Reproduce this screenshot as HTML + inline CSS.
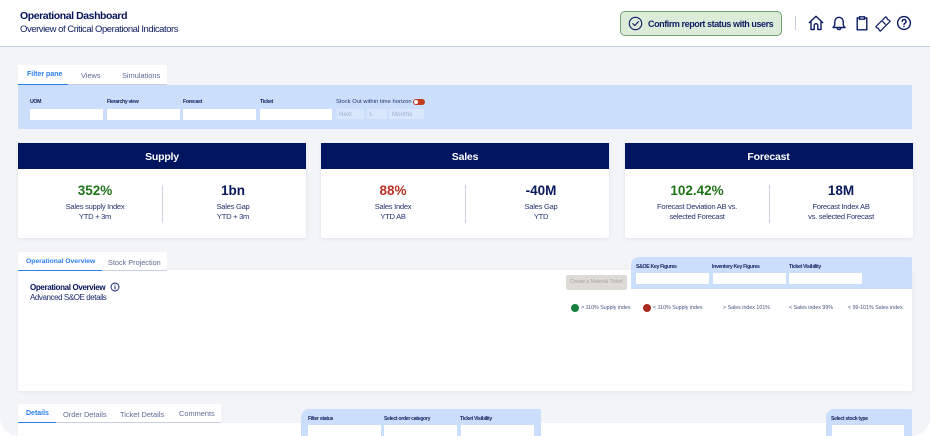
<!DOCTYPE html>
<html><head><meta charset="utf-8"><style>
*{box-sizing:border-box}
html,body{margin:0;padding:0;background:#fff}
body{width:930px;height:436px;overflow:hidden;position:relative;font-family:"Liberation Sans",sans-serif;color:#0a1a5c}
.a{position:absolute;white-space:nowrap}
.bg{position:absolute;left:0;top:46px;width:930px;height:390px;background:#f3f4f8;border-top:1.5px solid #ccd2e6;border-radius:0 0 18px 18px}
.card{position:absolute;top:142.5px;width:288px;height:95.5px;background:#fff;box-shadow:0 1px 4px rgba(30,40,90,.08);border-radius:2px}
.hd{height:26.5px;background:#001560;color:#fff;text-align:center;font-size:10.5px;font-weight:bold;line-height:28.5px;letter-spacing:-.2px}
.v{position:absolute;top:40px;font-size:13.5px;font-weight:bold;text-align:center;line-height:16px;width:144px}
.l{position:absolute;top:59.5px;font-size:7.6px;text-align:center;line-height:10px;width:144px;color:#26356f;letter-spacing:-.28px}
.dv{position:absolute;left:144px;top:42.5px;height:38px;width:1px;background:#ccd3e4}
.fl{position:absolute;font-size:5.2px;font-weight:bold;color:#152560;white-space:nowrap;letter-spacing:-.33px}
.in{position:absolute;background:#fff;height:11px}
.t{position:absolute;font-size:7.4px;color:#5f6a96;white-space:nowrap}
.t.on{color:#2a7ff0;font-weight:bold;font-size:7px}
.tb{position:absolute;background:#fff}
.lg{position:absolute;top:305px;font-size:5.3px;color:#47527f;white-space:nowrap}
.dot{position:absolute;top:304px;width:8px;height:8px;border-radius:50%}
svg.i{position:absolute;fill:none;stroke:#0b1c66;stroke-width:1.4;stroke-linecap:round;stroke-linejoin:round}
</style></head><body>
<div class="bg"></div>

<div class="a" style="left:20px;top:10px;font-size:10.5px;font-weight:bold;color:#06135a;line-height:13px;letter-spacing:-.43px">Operational Dashboard</div>
<div class="a" style="left:20px;top:24px;font-size:9.5px;color:#0f2064;line-height:12px;letter-spacing:-.45px">Overview of Critical Operational Indicators</div>

<div class="a" style="left:620px;top:11px;width:162px;height:25px;background:#dcecd9;border:1px solid #6fa673;border-radius:5px"></div>
<svg class="i" style="left:628px;top:16px" width="15" height="15" viewBox="0 0 15 15"><circle cx="7.5" cy="7.5" r="6.2" stroke-width="1.1"/><path d="M4.8 7.6l2 2 3.6-4" stroke-width="1.1"/></svg>
<div class="a" style="left:648px;top:17.500px;font-size:9px;font-weight:bold;color:#0f2064;line-height:12px;letter-spacing:-.43px">Confirm report status with users</div>
<div class="a" style="left:795px;top:16px;width:1px;height:14px;background:#c3cbe0"></div>
<svg class="i" style="left:808px;top:15px" width="16" height="16" viewBox="0 0 16 16"><path d="M1.3 7.6L8 1.3l6.700 6.300M3 6.500V14.500H6.200V10.500a1.800 1.800 0 0 1 3.600 0V14.500H13V6.500"/></svg>
<svg class="i" style="left:831px;top:15px" width="16" height="16" viewBox="0 0 16 16"><path d="M2 12.500c1.200-1 1.800-2 1.800-4V6.500a4.200 4.200 0 0 1 8.400 0v2c0 2 .6 3 1.800 4zM6.200 12.800a1.800 1.800 0 0 0 3.600 0"/></svg>
<svg class="i" style="left:854px;top:15px" width="16" height="16" viewBox="0 0 16 16"><path d="M5.500 3H3.200V14.800H12.800V3H10.500M5.500 1.800H10.500V4.200H5.500z"/></svg>
<svg class="i" style="left:874.500px;top:16px" width="16" height="16" viewBox="0 0 16 16"><g transform="rotate(-45 8 8)"><path d="M1 4.800H15V7a1.100 1.100 0 0 0 0 2V11.200H1V9a1.100 1.100 0 0 0 0-2zM9.500 6.200v3.600" stroke-width="1.200"/></g></svg>
<svg class="i" style="left:896px;top:15px" width="16" height="16" viewBox="0 0 16 16"><circle cx="8" cy="8" r="6.400"/><path d="M6.200 6.400a1.900 1.900 0 1 1 2.800 1.700c-.7.400-1 .8-1 1.500M8 11.500v.2"/></svg>

<div class="tb" style="left:18px;top:65px;width:149px;height:20px"></div>
<div class="a" style="left:18px;top:84px;width:50px;height:1.200px;background:#2a7ff0"></div>
<div class="a" style="left:68px;top:84px;width:99px;height:1.200px;background:#c9d0e4"></div>
<div class="t on" style="left:27px;top:71px">Filter pane</div>
<div class="t" style="left:81px;top:71px">Views</div>
<div class="t" style="left:122px;top:71px">Simulations</div>

<div class="a" style="left:18px;top:85px;width:894px;height:44px;background:#cbdffc"></div>
<div class="fl" style="left:30px;top:99px">UOM</div>
<div class="fl" style="left:107px;top:99px">Fierarchy view</div>
<div class="fl" style="left:183px;top:99px">Forecast</div>
<div class="fl" style="left:260px;top:99px">Ticket</div>
<div class="in" style="left:30px;top:108.500px;width:73px"></div>
<div class="in" style="left:107px;top:108.500px;width:72.500px"></div>
<div class="in" style="left:183px;top:108.500px;width:73px"></div>
<div class="in" style="left:260px;top:108.500px;width:72px"></div>
<div class="a" style="left:336px;top:98.500px;font-size:5.800px;color:#24326e;letter-spacing:.02px">Stock Out within time horizon</div>
<div class="a" style="left:413px;top:99px;width:12px;height:6px;border-radius:3px;background:#c23a20"></div>
<div class="a" style="left:414px;top:100px;width:4px;height:4px;border-radius:50%;background:#fff"></div>
<div class="a" style="left:337px;top:109px;width:27px;height:10px;background:#d9e7fc"></div>
<div class="a" style="left:367px;top:109px;width:20px;height:10px;background:#d9e7fc"></div>
<div class="a" style="left:389px;top:109px;width:35px;height:10px;background:#d9e7fc"></div>
<div class="a" style="left:339px;top:110.500px;font-size:6.200px;color:#9fb0cf">Next</div>
<div class="a" style="left:369px;top:110.500px;font-size:6.200px;color:#9fb0cf">1</div>
<div class="a" style="left:392px;top:110.500px;font-size:6.200px;color:#9fb0cf">Months</div>

<div class="card" style="left:18px"><div class="hd">Supply</div><div class="v" style="left:5px;color:#1f7418">352%</div><div class="v" style="left:143px;color:#0a1a5c">1bn</div><div class="dv"></div><div class="l" style="left:5px">Sales supply Index<br>YTD + 3m</div><div class="l" style="left:143px">Sales Gap<br>YTD + 3m</div></div>
<div class="card" style="left:321px"><div class="hd">Sales</div><div class="v" style="left:0;color:#b93222">88%</div><div class="v" style="left:148px;color:#0a1a5c">-40M</div><div class="dv"></div><div class="l" style="left:0">Sales Index<br>YTD AB</div><div class="l" style="left:148px">Sales Gap<br>YTD</div></div>
<div class="card" style="left:624.500px"><div class="hd">Forecast</div><div class="v" style="left:.5px;color:#1f7418">102.42%</div><div class="v" style="left:144.500px;color:#0a1a5c">18M</div><div class="dv"></div><div class="l" style="left:.5px">Forecast Deviation AB vs.<br>selected Forecast</div><div class="l" style="left:144.500px">Forecast Index AB<br>vs. selected Forecast</div></div>

<div class="a" style="left:18px;top:270px;width:894px;height:121px;background:#fff;box-shadow:0 1px 4px rgba(30,40,90,.07)"></div>
<div class="tb" style="left:18px;top:252px;width:149px;height:19px"></div>
<div class="a" style="left:18px;top:270px;width:84px;height:1.200px;background:#2a7ff0"></div>
<div class="a" style="left:102px;top:270px;width:65px;height:1.200px;background:#c9d0e4"></div>
<div class="t on" style="left:26px;top:257.500px;font-size:6.800px;letter-spacing:-.03px">Operational Overview</div>
<div class="t" style="left:108px;top:258px;font-size:7.300px">Stock Projection</div>
<div class="a" style="left:30px;top:282px;font-size:8px;font-weight:bold;color:#06135a;line-height:11px;letter-spacing:-.35px">Operational Overview</div>
<svg class="i" style="left:110px;top:282px" width="10" height="10" viewBox="0 0 10 10"><circle cx="5" cy="5" r="4" stroke-width=".9"/><path d="M5 4.600V7M5 3v.2" stroke-width="1"/></svg>
<div class="a" style="left:30px;top:292px;font-size:8px;color:#1c2c6c;line-height:11px;letter-spacing:-.43px">Advanced S&amp;OE details</div>

<div class="a" style="left:566px;top:275px;width:61px;height:14.500px;background:#dedbd6;border-radius:2px"></div>
<div class="a" style="left:570px;top:279px;font-size:5px;color:#a3a3a0">Create a Material Ticket</div>
<div class="a" style="left:631px;top:257px;width:281px;height:32px;background:#cbdffc;border-radius:8px 2px 0 0"></div>
<div class="fl" style="left:636px;top:264px">S&amp;OE Key Figures</div>
<div class="fl" style="left:712px;top:264px">Inventory Key Figures</div>
<div class="fl" style="left:789px;top:264px">Ticket Visibility</div>
<div class="in" style="left:636px;top:273px;width:72.500px"></div>
<div class="in" style="left:713px;top:273px;width:72.500px"></div>
<div class="in" style="left:789px;top:273px;width:72.500px"></div>

<div class="dot" style="left:570.500px;background:#16803c"></div>
<div class="lg" style="left:581px">&gt; 110% Supply index</div>
<div class="dot" style="left:643px;background:#a92a20"></div>
<div class="lg" style="left:653px">&lt; 110% Supply index</div>
<div class="lg" style="left:723px">&gt; Sales index 101%</div>
<div class="lg" style="left:789px">&lt; Sales index 99%</div>
<div class="lg" style="left:848px">&lt; 99-101% Sales index</div>

<div class="a" style="left:18px;top:423px;width:894px;height:13px;background:#fff"></div>
<div class="tb" style="left:18px;top:404px;width:203px;height:19px"></div>
<div class="a" style="left:18px;top:422px;width:38px;height:1.200px;background:#2a7ff0"></div>
<div class="a" style="left:56px;top:422px;width:165px;height:1.200px;background:#c9d0e4"></div>
<div class="t on" style="left:26px;top:409.500px">Details</div>
<div class="t" style="left:63px;top:410px">Order Details</div>
<div class="t" style="left:120px;top:410px">Ticket Details</div>
<div class="t" style="left:179px;top:409px">Comments</div>

<div class="a" style="left:301px;top:409px;width:240px;height:27px;background:#cbdffc;border-radius:8px 2px 0 0"></div>
<div class="fl" style="left:308px;top:415.500px">Filter status</div>
<div class="fl" style="left:384px;top:415.500px">Select order category</div>
<div class="fl" style="left:460px;top:415.500px">Ticket Visibility</div>
<div class="in" style="left:308px;top:425px;width:73px"></div>
<div class="in" style="left:384px;top:425px;width:72.500px"></div>
<div class="in" style="left:461px;top:425px;width:72.500px"></div>

<div class="a" style="left:826px;top:409px;width:86px;height:27px;background:#cbdffc;border-radius:8px 2px 0 0"></div>
<div class="fl" style="left:831px;top:415.500px">Select stock type</div>
<div class="in" style="left:832px;top:425px;width:72px"></div>
</body></html>
